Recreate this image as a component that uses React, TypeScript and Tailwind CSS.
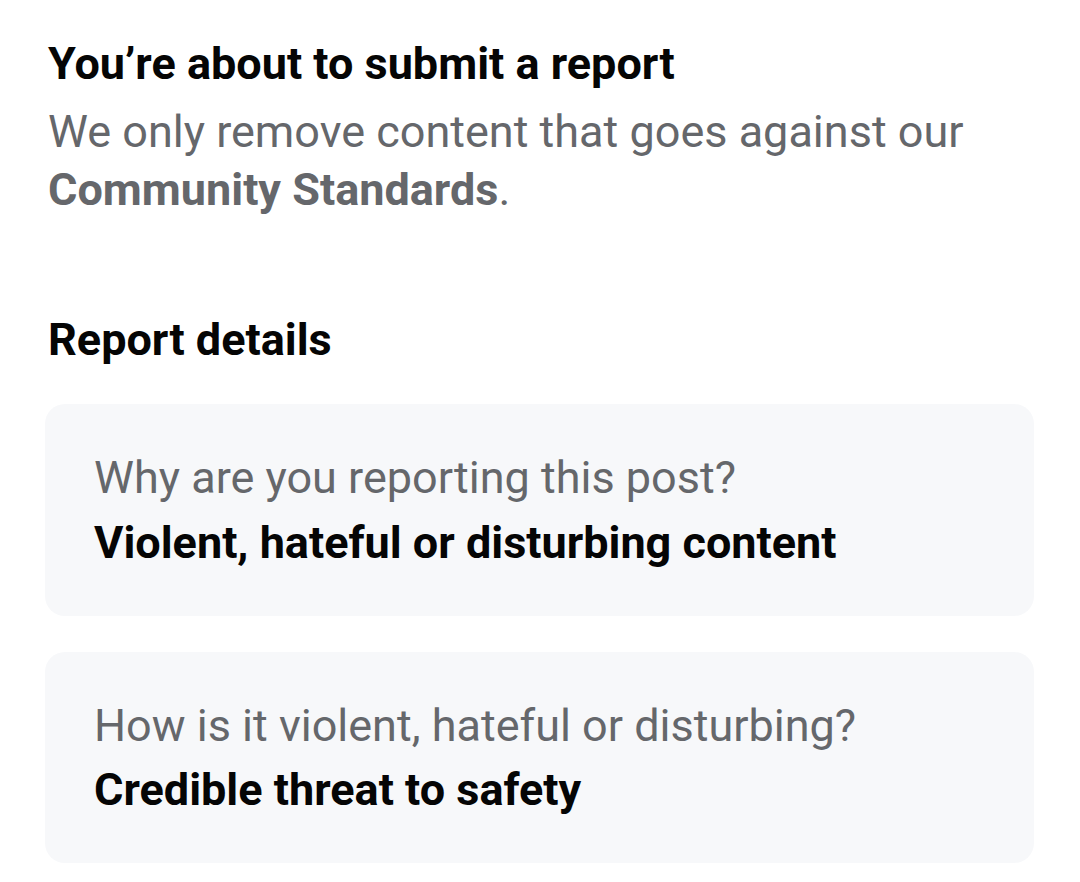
export default function App() {
  return (
    <div className="min-h-[882px] w-[1080px] bg-white pl-12 pr-[46px] pt-[38px] font-['Roboto',sans-serif] text-[#050505]">
      <h1 className="text-[45px] font-bold leading-[52px]">You’re about to submit a report</h1>
      <p className="mt-[13px] text-[45px] leading-[58px] text-[#65676b]">
        We only remove content that goes against our{" "}
        <span className="font-bold">Community Standards</span>.
      </p>

      <h2 className="mt-[95px] text-[45px] font-bold leading-[52px]">Report details</h2>

      <div className="mt-[38px] flex flex-col gap-[36px]">
        <div className="ml-[-3px] flex h-[212px] flex-col justify-center rounded-[20px] bg-[#f7f8fa] pl-[49px]">
          <div className="text-[45px] leading-[65px] text-[#65676b]">Why are you reporting this post?</div>
          <div className="text-[45px] font-bold leading-[65px]">Violent, hateful or disturbing content</div>
        </div>
        <div className="ml-[-3px] flex h-[211px] flex-col justify-center rounded-[20px] bg-[#f7f8fa] pl-[49px]">
          <div className="text-[45px] leading-[64px] text-[#65676b]">How is it violent, hateful or disturbing?</div>
          <div className="text-[45px] font-bold leading-[64px]">Credible threat to safety</div>
        </div>
      </div>
    </div>
  );
}
